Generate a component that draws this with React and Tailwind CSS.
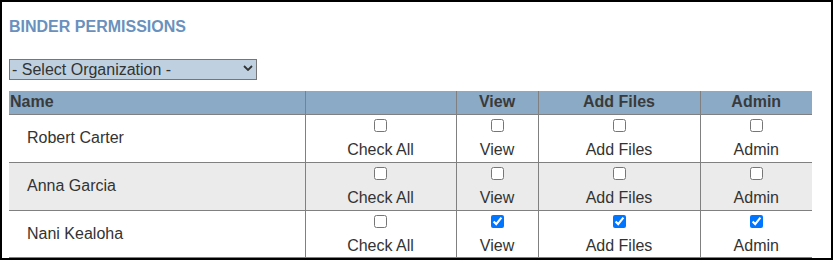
import { useState } from "react";

const users = [
  { name: "Robert Carter", checked: false, bg: "bg-white", h: "h-[48px]" },
  { name: "Anna Garcia", checked: false, bg: "bg-[#ebebeb]", h: "h-[48px]" },
  { name: "Nani Kealoha", checked: true, bg: "bg-white", h: "h-[47px]" },
];

const CheckCell = ({ label, checked }) => (
  <td className="border-b border-l border-[#808080] p-0 align-top">
    <div className="flex flex-col items-center pt-[4px]">
      <input type="checkbox" defaultChecked={checked} className="block h-[13px] w-[13px]" />
      <span className="mt-[9px] leading-[18px]">{label}</span>
    </div>
  </td>
);

export default function App() {
  const [org, setOrg] = useState("");

  return (
    <div className="h-[260px] w-full overflow-hidden border-2 border-black pl-[7px] pt-[16px] font-['Liberation_Sans',Arial,sans-serif] text-[16px] text-[#333]">
      <h2 className="text-[16px] font-bold leading-[18px] text-[#6a91bd]">BINDER PERMISSIONS</h2>

      <div className="relative mt-[23px] h-[21px] w-[248px]">
        <select
          value={org}
          onChange={(e) => setOrg(e.target.value)}
          className="block h-[21px] w-[248px] appearance-none border border-[#767676] bg-[#bfd1e0] pl-[2px] text-[16px] leading-[18px] text-[#333] outline-none"
        >
          <option value="">- Select Organization -</option>
        </select>
        <svg
          className="pointer-events-none absolute right-[4px] top-[6px]"
          width="10"
          height="6"
          viewBox="0 0 10 6"
          fill="none"
        >
          <path d="M1 1 L5 5 L9 1" stroke="#333" strokeWidth="1.8" />
        </svg>
      </div>

      <table className="mt-[11px] w-[803px] table-fixed border-collapse">
        <colgroup>
          <col className="w-[296px]" />
          <col className="w-[151px]" />
          <col className="w-[82px]" />
          <col className="w-[162px]" />
          <col className="w-[112px]" />
        </colgroup>
        <thead>
          <tr className="h-[23px] bg-[#8aaac5] text-[#3a3a3a]">
            <th className="border-b border-[#808080] p-0 pl-[1px] text-left font-bold leading-[18px]">Name</th>
            <th className="border-b border-l border-[#808080] p-0"></th>
            <th className="border-b border-l border-[#808080] p-0 text-center font-bold leading-[18px]">View</th>
            <th className="border-b border-l border-[#808080] p-0 text-center font-bold leading-[18px]">Add Files</th>
            <th className="border-b border-l border-[#808080] p-0 text-center font-bold leading-[18px]">Admin</th>
          </tr>
        </thead>
        <tbody>
          {users.map((u) => (
            <tr key={u.name} className={`${u.h} ${u.bg}`}>
              <td className="border-b border-[#808080] p-0 pl-[18px] align-middle leading-[18px]">{u.name}</td>
              <CheckCell label="Check All" checked={false} />
              <CheckCell label="View" checked={u.checked} />
              <CheckCell label="Add Files" checked={u.checked} />
              <CheckCell label="Admin" checked={u.checked} />
            </tr>
          ))}
        </tbody>
      </table>
    </div>
  );
}
